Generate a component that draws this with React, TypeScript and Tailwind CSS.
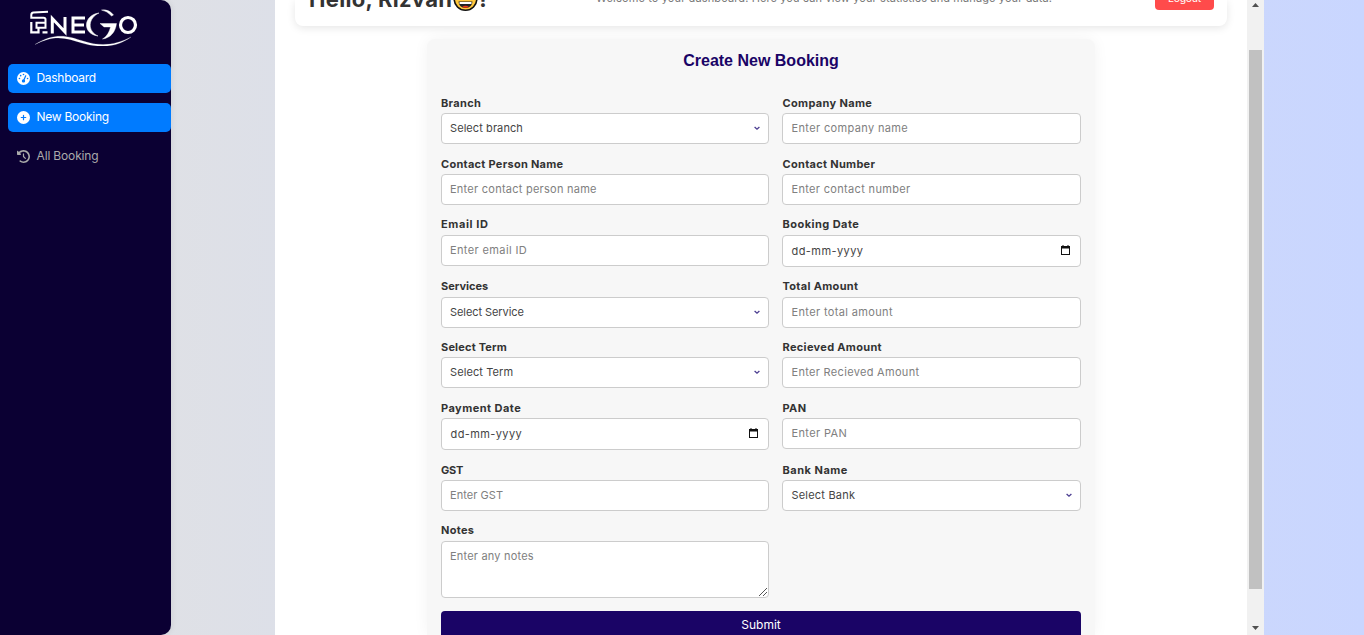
import { ReactNode } from "react";
import { FaCirclePlus, FaClockRotateLeft, FaGaugeHigh } from "react-icons/fa6";

type Kind = "text" | "select" | "date" | "area";

function Chevron() {
  return (
    <svg className="mt-px h-[5px] w-[6px]" viewBox="0 0 6 5" fill="none" stroke="#4a3c90" strokeWidth="1.3">
      <path d="M0.6 1 L3 3.2 L5.4 1" />
    </svg>
  );
}

function Calendar() {
  return (
    <svg className="mb-[2px] mr-[2px] h-[10px] w-[9px]" viewBox="0 0 9 10">
      <path d="M0 1h1.5V0h1v1h4V0h1v1H9v9H0zM1 3.5V9h7V3.5z" fill="#111" fillRule="evenodd" />
    </svg>
  );
}

interface FieldProps {
  label: string;
  hint: string;
  kind?: Kind;
  gap: string;
  tl: string;
  th: string;
}

function Field({ label, hint, kind = "text", gap, tl, th }: FieldProps) {
  const height = kind === "area" ? "h-[57px] items-start pt-[7px]" : kind === "date" ? "h-8 items-center" : "h-[31px] items-center pb-px";
  const color = kind === "select" || kind === "date" ? "text-[#444]" : "text-[#808080]";
  return (
    <div className={gap}>
      <div className={`whitespace-nowrap text-[11px] font-bold leading-[14px] text-[#333] ${tl}`}>{label}</div>
      <div className={`relative mt-[3px] flex justify-between rounded-[4px] border border-[#ccc] bg-white px-2 text-[11px] leading-[14px] in-[.tall]:mt-1 ${height} ${color}`}>
        <span className={`whitespace-nowrap ${th}`}>{hint}</span>
        {kind === "select" && <Chevron />}
        {kind === "date" && <Calendar />}
        {kind === "area" && (
          <svg className="absolute bottom-0 right-0 h-[10px] w-[10px]" viewBox="0 0 10 10" stroke="#555" strokeWidth="1">
            <path d="M1 9 L9 1 M5 9 L9 5" />
          </svg>
        )}
      </div>
    </div>
  );
}

function NavItem({ icon, children, active, tracking }: { icon: ReactNode; children: ReactNode; active?: boolean; tracking: string }) {
  return (
    <div className={`flex h-[29px] items-center gap-[6.5px] rounded-[5px] pl-[9px] text-[12px] ${active ? "bg-[#007bff] text-white" : "text-[#aaa]"}`}>
      {icon}
      <span className={`whitespace-nowrap pb-px ${tracking}`}>{children}</span>
    </div>
  );
}

function Logo() {
  return (
    <svg className="ml-[28px] mt-[6px] h-10 w-[112px] shrink-0" viewBox="28 6 112 40" fill="none" stroke="#fff">
      <path d="M48 11.800 L33.500 12.600 Q31.300 12.800 31.300 15 V17.800 H43.500 Q45.500 17.800 45.500 19.500 V27.800 H36.500 V22.800 H45" strokeWidth="2" />
      <path d="M31.300 22 V32.400 H38.500 V28 M42.500 32.400 H47.500" strokeWidth="2.200" />
      <path d="M52.300 33.500 V18.500 L65 32 V17" strokeWidth="3" />
      <path d="M85 18 H73 V32 H85 M73 25 H84" strokeWidth="3" />
      <path d="M99 13 C83 15 82 34 98 36 C87 31 88 18 99 13Z" fill="#fff" strokeWidth=".5" />
      <path d="M101.500 10 Q109 9 113.500 15 L111.500 16 Q107 11 101.500 10Z M100 23.500 H116.500 C115.500 32 110.500 38 102.500 39 C107.500 36 109.500 31 110.500 27 H104Z" fill="#fff" strokeWidth=".4" />
      <circle cx="128" cy="25" r="7.500" strokeWidth="3.200" />
      <path d="M35 44.500 C56 31 70 37 83 41 C101 47 116 45 131 37 C116 48 99 48 82 43 C66 38 55 34 35 44.500Z" fill="#fff" strokeWidth=".2" />
    </svg>
  );
}

function Emoji() {
  return (
    <svg className="ml-px mt-[-15px] h-[27px] w-[25px] shrink-0" viewBox="0 0 25 27">
      <circle cx="12.500" cy="14" r="11.300" fill="#ffc83d" stroke="#111" strokeWidth="1.600" />
      <path d="M5.500 16.500 H19.500 Q19 23 12.500 23 Q6 23 5.500 16.500Z" fill="#222" />
      <path d="M6.500 17 H18.500 V19 H6.500Z" fill="#fff" />
      <path d="M9 22 Q12.500 19.500 16 22 Q12.500 23.500 9 22Z" fill="#f03a17" />
    </svg>
  );
}

export default function App() {
  return (
    <div className="flex h-[635px] w-[1364px] overflow-hidden bg-linear-to-r from-[#e2e2e2] to-[#c9d6ff] font-['Inter',sans-serif]">
      <aside className="flex w-[171px] shrink-0 flex-col rounded-r-[10px] bg-[#0b0033] shadow-[2px_0_5px_rgba(0,0,0,0.05)]">
        <Logo />
        <nav className="mt-[18px] flex flex-col gap-[10px] pl-2">
          <NavItem active icon={<FaGaugeHigh size={13} />} tracking="tracking-[-0.3px]">Dashboard</NavItem>
          <NavItem active icon={<FaCirclePlus size={13} />} tracking="tracking-[-0.25px]">New Booking</NavItem>
          <NavItem icon={<FaClockRotateLeft size={13} />} tracking="tracking-[-0.15px]">All Booking</NavItem>
        </nav>
      </aside>
      <main className="ml-[104px] flex w-[989px] shrink-0 bg-white">
        <div className="flex w-[972px] flex-col">
          <header className="ml-5 flex h-[26px] w-[932px] shrink-0 items-start rounded-b-[8px] bg-white shadow-[0_2px_8px_rgba(0,0,0,0.1)]">
            <div className="ml-[14px] flex w-[287px] items-start text-[22px] font-bold leading-[26px] text-[#333]">
              <span className="-mt-[14px] whitespace-nowrap tracking-[0.3px]">Hello, Rizvan</span>
              <Emoji />
              <span className="-mt-[14px] pl-px">!</span>
            </div>
            <p className="-mt-[9px] w-[559px] whitespace-nowrap text-[11px] leading-[14px] tracking-[0.11px] text-[#777]">
              Welcome to your dashboard. Here you can view your statistics and manage your data.
            </p>
            <button className="-mt-[13px] h-[23px] w-[59px] rounded-[4px] bg-[#ff4b4b] text-[10.500px] leading-[23px] tracking-[-0.3px] text-white">Logout</button>
          </header>
          <section className="ml-[152px] mt-[13px] h-[596px] w-[668px] rounded-t-[8px] bg-[#f7f7f7] px-[14px] shadow-[0_0_15px_rgba(0,0,0,0.05)]">
            <h2 className="pt-[12px] text-center font-['Liberation_Sans',sans-serif] text-[16px] font-bold leading-5 text-[#1a0466]">Create New Booking</h2>
            <div className="mt-[25px] flex gap-[13px]">
              <div className="flex w-[328px] flex-col">
                <Field gap="" label="Branch" hint="Select branch" kind="select" tl="tracking-[0.33px]" th="tracking-[0.08px]" />
                <Field gap="mt-[13px]" label="Contact Person Name" hint="Enter contact person name" tl="tracking-[0.28px]" th="tracking-[0.25px]" />
                <Field gap="tall mt-[12px]" label="Email ID" hint="Enter email ID" tl="tracking-[0.6px]" th="tracking-[0.38px]" />
                <Field gap="tall mt-[13px]" label="Services" hint="Select Service" kind="select" tl="tracking-[0px]" th="tracking-[-0.07px]" />
                <Field gap="mt-[12px]" label="Select Term" hint="Select Term" kind="select" tl="tracking-[0.18px]" th="tracking-[0.1px]" />
                <Field gap="mt-[13px]" label="Payment Date" hint="dd-mm-yyyy" kind="date" tl="tracking-[0.46px]" th="pl-[0.5px] tracking-[0.4px]" />
                <Field gap="mt-[13px]" label="GST" hint="Enter GST" tl="tracking-[-0.2px]" th="tracking-[0.05px]" />
                <Field gap="tall mt-[12px]" label="Notes" hint="Enter any notes" kind="area" tl="tracking-[0.3px]" th="tracking-[0.2px]" />
              </div>
              <div className="flex w-[299px] flex-col">
                <Field gap="" label="Company Name" hint="Enter company name" tl="pl-[0.5px] tracking-[0.34px]" th="pl-[0.5px] tracking-[0.36px]" />
                <Field gap="mt-[13px]" label="Contact Number" hint="Enter contact number" tl="pl-[0.5px] tracking-[0.3px]" th="pl-[0.5px] tracking-[0.33px]" />
                <Field gap="tall mt-[12px]" label="Booking Date" hint="dd-mm-yyyy" kind="date" tl="pl-[0.5px] tracking-[0.46px]" th="pl-[0.5px] tracking-[0.43px]" />
                <Field gap="tall mt-[12px]" label="Total Amount" hint="Enter total amount" tl="pl-[0.5px] tracking-[0.32px]" th="pl-[0.5px] tracking-[0.36px]" />
                <Field gap="mt-[12px]" label="Recieved Amount" hint="Enter Recieved Amount" tl="pl-[0.5px] tracking-[0.32px]" th="pl-[0.5px] tracking-[0.31px]" />
                <Field gap="mt-[13px]" label="PAN" hint="Enter PAN" tl="pl-[0.5px] tracking-[0.4px]" th="pl-[0.5px] tracking-[0.38px]" />
                <Field gap="mt-[14px]" label="Bank Name" hint="Select Bank" kind="select" tl="pl-[0.5px] tracking-[0.5px]" th="pl-[0.5px] tracking-[0.2px]" />
              </div>
            </div>
            <button className="mt-[13px] block h-[29px] w-[640px] rounded-[4px] bg-[#1a0466] pb-px text-[12px] text-white">Submit</button>
          </section>
        </div>
        <div className="flex w-[17px] flex-col items-center bg-[#f1f1f1]">
          <svg className="mt-[3px] h-1 w-[7px]" viewBox="0 0 7 4"><path d="M0 4 L3.500 0 L7 4Z" fill="#505050" /></svg>
          <div className="mt-[43px] h-[539px] w-[13px] bg-[#c1c1c1]" />
          <svg className="mt-[37px] h-1 w-[7px]" viewBox="0 0 7 4"><path d="M0 0 L3.500 4 L7 0Z" fill="#505050" /></svg>
        </div>
      </main>
    </div>
  );
}
